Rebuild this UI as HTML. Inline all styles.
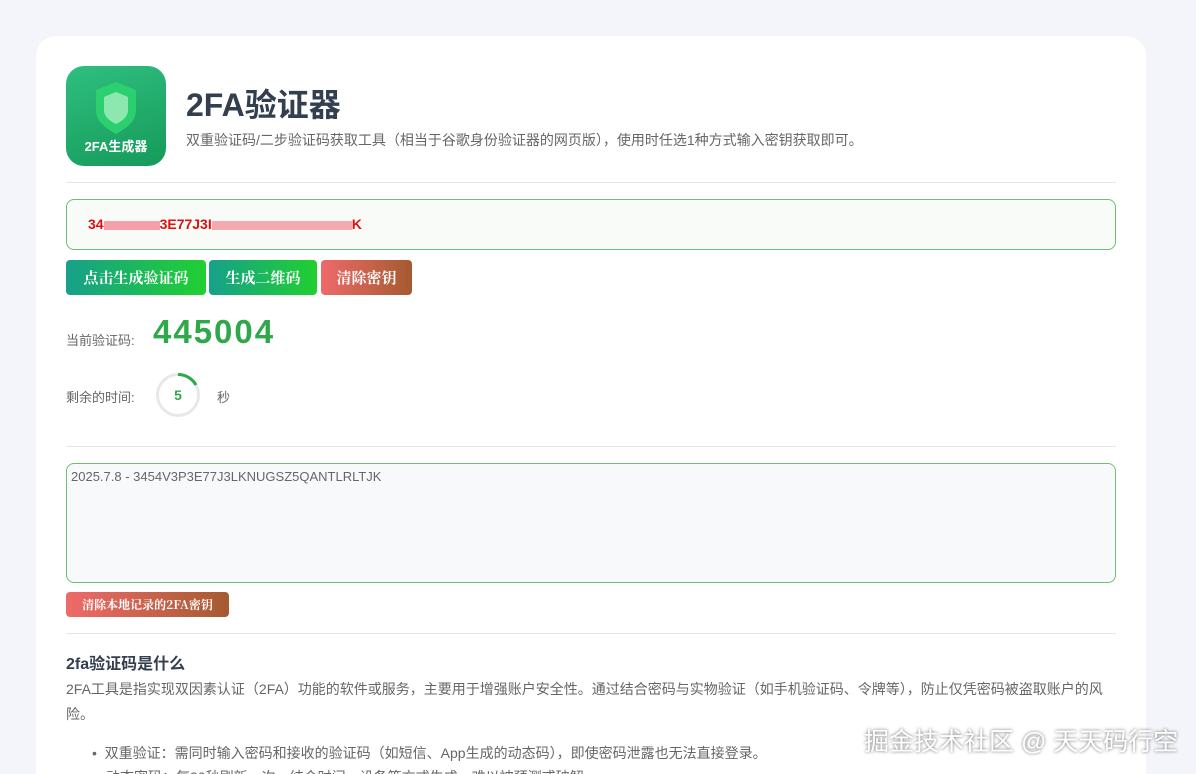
<!DOCTYPE html>
<html><head><meta charset="utf-8"><style>
*{box-sizing:border-box;margin:0;padding:0}
html,body{width:1196px;height:774px;overflow:hidden}
body{background:#f4f5fa;font-family:"Liberation Sans","Noto Sans CJK SC",sans-serif;color:#555;position:relative}
.card{position:absolute;left:36px;top:36px;width:1110px;height:738px;background:#fff;border-radius:20px 20px 0 0}
.abs{position:absolute}
.logo{left:66px;top:66px;width:100px;height:100px;border-radius:18px;background:linear-gradient(160deg,#2fbf7f,#159a5a)}
.hr{left:66px;width:1050px;height:1px;background:#e6e6e6}
.btn{position:absolute;top:260px;height:35px;border-radius:4px;color:#fff;font-weight:bold;font-size:15px;line-height:35px;text-align:center;font-family:"Noto Serif CJK SC",serif}
.g{background:linear-gradient(90deg,#17a08a,#20d030)}
.r{background:linear-gradient(90deg,#ee6a6a,#a55a30)}
</style></head><body>
<div class="card"></div>
<div class="abs logo">
<svg width="100" height="100" style="position:absolute;left:0;top:0"><path d="M50 16 L70 24 V44 C70 56 60 62 50 68 C40 62 30 56 30 44 V24 Z" fill="#2ed36f" opacity=".9"/><path d="M50 26 L62 31 V44 C62 51 56 55 50 58 C44 55 38 51 38 44 V31 Z" fill="#8de8b0"/></svg>
<div class="abs" style="left:0;top:70px;width:100px;text-align:center;color:#fff;font-weight:bold;font-size:13px">2FA生成器</div>
</div>
<div class="abs" style="left:186px;top:80px;font-size:32px;font-weight:bold;color:#333e4e">2FA验证器</div>
<div class="abs" style="left:186px;top:130px;font-size:14px;color:#666">双重验证码/二步验证码获取工具（相当于谷歌身份验证器的网页版），使用时任选1种方式输入密钥获取即可。</div>
<div class="abs hr" style="top:182px"></div>
<div class="abs" style="left:66px;top:199px;width:1050px;height:51px;border:1px solid #6cc070;border-radius:8px;background:#f9fbf9"></div>
<div class="abs" style="left:88px;top:216px;font-size:14px;font-weight:bold;color:#e01010">34<span style="display:inline-block;width:56px;height:9px;background:#f4a0a8;vertical-align:middle"></span>3E77J3I<span style="display:inline-block;width:140px;height:9px;background:#f4a8b0;vertical-align:middle"></span>K</div>
<div class="btn g" style="left:66px;width:140px">点击生成验证码</div>
<div class="btn g" style="left:209px;width:108px">生成二维码</div>
<div class="btn r" style="left:321px;width:91px">清除密钥</div>
<div class="abs" style="left:66px;top:330px;font-size:13px;color:#666">当前验证码:</div>
<div class="abs" style="left:153px;top:313px;font-size:33px;font-weight:bold;color:#2ea84a;letter-spacing:2px">445004</div>
<div class="abs" style="left:66px;top:387px;font-size:13px;color:#666">剩余的时间:</div>
<svg class="abs" style="left:155px;top:372px" width="46" height="46"><circle cx="23" cy="23" r="20.5" fill="none" stroke="#e8e8e8" stroke-width="3"/><path d="M23 2.5 A20.5 20.5 0 0 1 41 13" fill="none" stroke="#2ea84a" stroke-width="3"/><text x="23" y="28" text-anchor="middle" font-size="14" font-weight="bold" fill="#2ea84a" font-family="Liberation Sans">5</text></svg>
<div class="abs" style="left:217px;top:387px;font-size:13px;color:#666">秒</div>
<div class="abs hr" style="top:446px"></div>
<div class="abs" style="left:66px;top:463px;width:1050px;height:120px;border:1px solid #6cc070;border-radius:8px;background:#f8f9fb;padding:5px 4px;font-size:13px;color:#666">2025.7.8 - 3454V3P3E77J3LKNUGSZ5QANTLRLTJK</div>
<div class="btn r" style="left:66px;top:592px;width:163px;height:25px;line-height:25px;font-size:12px">清除本地记录的2FA密钥</div>
<div class="abs hr" style="top:633px"></div>
<div class="abs" style="left:66px;top:650px;font-size:16px;font-weight:bold;color:#333e4e">2fa验证码是什么</div>
<div class="abs" style="left:66px;top:677px;width:1050px;font-size:14px;color:#666;line-height:25px">2FA工具是指实现双因素认证（2FA）功能的软件或服务，主要用于增强账户安全性。通过结合密码与实物验证（如手机验证码、令牌等），防止仅凭密码被盗取账户的风险。</div>
<div class="abs" style="left:92px;top:743px;font-size:14px;color:#666">•&nbsp;&nbsp;双重验证：需同时输入密码和接收的验证码（如短信、App生成的动态码），即使密码泄露也无法直接登录。</div>
<div class="abs" style="left:106px;top:767px;font-size:14px;color:#666">动态密码：每30秒刷新一次，结合时间、设备等方式生成，难以被预测或破解。</div>
<div class="abs" style="left:864px;top:722px;font-size:25px;color:#fff;text-shadow:0 0 3px rgba(0,0,0,.6)">掘金技术社区 @ 天天码行空</div>
</body></html>
